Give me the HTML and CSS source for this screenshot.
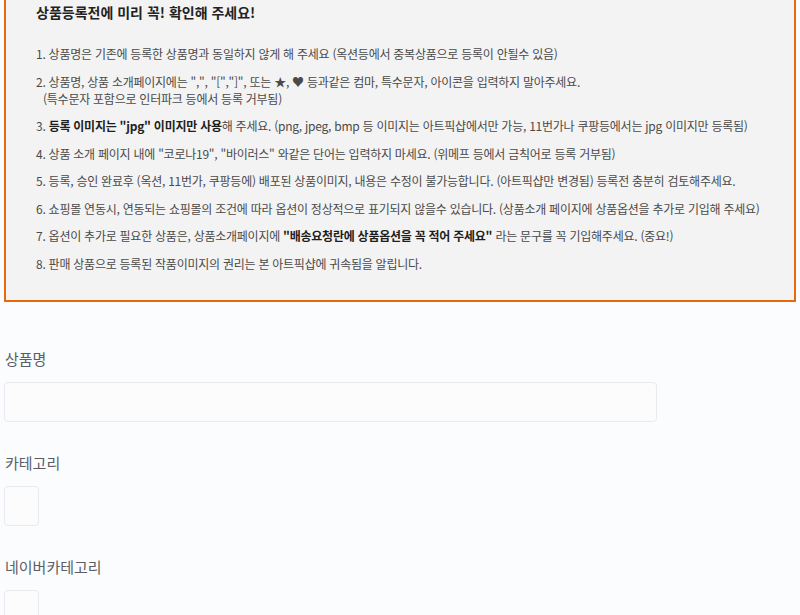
FILE: index.html
```html
<!DOCTYPE html>
<html lang="ko">
<head>
    <meta charset="UTF-8">
    <meta name="viewport" content="width=device-width, initial-scale=1.0">
    <title>상품등록</title>

    <link rel="stylesheet" href="styles.css">
</head>
<body>
    <section class="notice">
        <h3 class="notice-title">상품등록전에 미리 꼭! 확인해 주세요!</h3>

        <ol class="notice-list">
            <li>1. 상품명은 기존에 등록한 상품명과 동일하지 않게 해 주세요 (옥션등에서 중복상품으로 등록이 안될수 있음)</li>
            <li>2. 상품명, 상품 소개페이지에는 ",", "[","]", 또는 ★, ♥ 등과같은 컴마, 특수문자, 아이콘을 입력하지 말아주세요.<br><span class="indent">(특수문자 포함으로 인터파크 등에서 등록 거부됨)</span></li>
            <li>3. <b>등록 이미지는 "jpg" 이미지만 사용</b>해 주세요. (png, jpeg, bmp 등 이미지는 아트픽샵에서만 가능, 11번가나 쿠팡등에서는 jpg 이미지만 등록됨)</li>
            <li>4. 상품 소개 페이지 내에 "코로나19", "바이러스" 와같은 단어는 입력하지 마세요. (위메프 등에서 금칙어로 등록 거부됨)</li>
            <li>5. 등록, 승인 완료후 (옥션, 11번가, 쿠팡등에) 배포된 상품이미지, 내용은 수정이 불가능합니다. (아트픽샵만 변경됨) 등록전 충분히 검토해주세요.</li>
            <li>6. 쇼핑몰 연동시, 연동되는 쇼핑몰의 조건에 따라 옵션이 정상적으로 표기되지 않을수 있습니다. (상품소개 페이지에 상품옵션을 추가로 기입해 주세요)</li>
            <li>7. 옵션이 추가로 필요한 상품은, 상품소개페이지에 <b>"배송요청란에 상품옵션을 꼭 적어 주세요"</b> 라는 문구를 꼭 기입해주세요. (중요!)</li>
            <li>8. 판매 상품으로 등록된 작품이미지의 권리는 본 아트픽샵에 귀속됨을 알립니다.</li>
        </ol>
    </section>

    <form class="product-form">
        <label class="field-label" for="product-name">상품명</label>
        <input type="text" id="product-name" class="field-input">

        <label class="field-label">카테고리</label>
        <div class="field-select"></div>

        <label class="field-label">네이버카테고리</label>
        <div class="field-select"></div>
    </form>
</body>
</html>
```

FILE: styles.css
```css
body {
    margin: 0;
    font-family: "Noto Sans CJK KR", "Noto Sans", sans-serif;
    background-color: #fbfcfd;
}

.notice {
    margin: 0 4px;
    padding: 2px 20px 28px 30px;

    background-color: #f3f3f3;

    border: 2px solid #e8680c;
    border-top: none;
}

.notice-title {
    margin: 0;

    font-size: 14px;
    line-height: 20px;
    font-weight: bold;
    color: #222;
}

.notice-list {
    list-style: none;
    margin: 23px 0 0;
    padding: 0;
}

.notice-list li {
    font-size: 12px;
    line-height: 17px;
    letter-spacing: -0.25px;
    color: #4a4a4a;

    margin-bottom: 10.5px;
}

.notice-list li:last-child {
    margin-bottom: 0;
}

.notice-list b {
    color: #1e1e1e;
}

.notice-list .indent {
    padding-left: 7px;
}

.product-form {
    display: flex;
    flex-direction: column;
    align-items: flex-start;

    padding: 0 4px;
}

.field-label {
    margin: 30px 0 12px 1px;

    font-size: 15px;
    line-height: 22px;
    color: #5a5f67;
}

.field-label:first-child {
    margin-top: 46px;
}

.field-input {
    box-sizing: border-box;
    width: 653px;
    height: 40px;

    background-color: #fcfcfd;

    border: 1px solid #e8eaee;
    border-radius: 4px;
}

.field-select {
    box-sizing: border-box;
    width: 35px;
    height: 40px;

    background-color: #fcfcfd;

    border: 1px solid #e8eaee;
    border-radius: 4px;
}
```
